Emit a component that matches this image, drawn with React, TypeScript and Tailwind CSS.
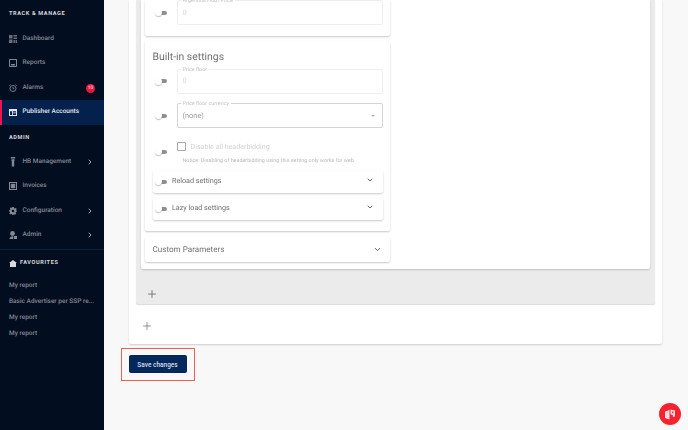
import { ChevronDown, ChevronRight, Plus } from 'lucide-react';

const icons = {
    dashboard: (
        <svg width="8" height="8" viewBox="0 0 8 8" fill="currentColor" opacity="0.8">
            <path d="M0 0h3.5v3.5H0zM4.5 0H8v1.5H4.500zM4.500 2.500H8v1.500H4.500zM0 4.500h3.500V8H0zM4.500 5H6v3H4.500zM6.600 5H8v3H6.600z" />
        </svg>
    ),
    reports: (
        <svg width="8" height="8" viewBox="0 0 8 8" fill="none" stroke="currentColor">
            <path d="M.5.5h7v7h-7z" />
            <path d="M2 5h4v1.500H2z" fill="currentColor" stroke="none" />
        </svg>
    ),
    alarm: (
        <svg width="8" height="8" viewBox="0 0 8 8" fill="none" stroke="currentColor" strokeWidth="0.9">
            <circle cx="4" cy="4.500" r="3" />
            <path d="M4 3v1.600h1.200M.4 1.600 1.600.6M7.600 1.600 6.400.6" />
        </svg>
    ),
    publisher: (
        <svg width="8" height="7" viewBox="0 0 8 7" fill="currentColor">
            <path fillRule="evenodd" d="M0 0h8v7H0zM1 2.200v3.800h2V2.200zM3.800 2.200V3.400H7V2.200zM3.800 4.200V6H7V4.200z" />
        </svg>
    ),
    hb: (
        <svg width="8" height="10" viewBox="0 0 8 10" fill="currentColor">
            <path d="M1.800 0h4.400v1.600H1.800zM2.400 2.200h3.200v1.400l-.4.700v5.200H2.800V4.300l-.4-.7z" />
        </svg>
    ),
    invoices: (
        <svg width="8" height="8" viewBox="0 0 8 8" fill="currentColor">
            <path fillRule="evenodd" d="M0 0h8v8H0zM1 1v6h6V1z" />
            <path d="M1.800 1.800h4.400v4.400H1.800z" />
        </svg>
    ),
    config: (
        <svg width="8" height="8" viewBox="0 0 8 8" fill="currentColor">
            <path fillRule="evenodd" d="M3.200 0h1.600l.2 1.100.8.4 1-.6 1 1.200-.7.9.2.8L8 3.400v1.200l-1.100.3-.4.8.6 1L6 7.900l-.9-.7-.4.1-.2.7H3.300l-.2-.7-.8-.4-1 .6-1-1.200.7-.9-.2-.8L0 4.400V3.200l1-.2.400-.8-.6-1L2 .3l.9.7.2-.1zM4 2.700a1.300 1.300 0 1 0 0 2.600 1.300 1.300 0 0 0 0-2.600z" />
        </svg>
    ),
    admin: (
        <svg width="8" height="8" viewBox="0 0 8 8" fill="currentColor">
            <path d="M3.500 0a2.400 2.400 0 0 1 2.400 2.400c0 1.300-1 2.400-2.400 2.400S1.100 3.700 1.100 2.400A2.400 2.400 0 0 1 3.500 0zM.5 8c0-1.700 1.300-2.800 3-2.800l.8.1V8z" />
            <path d="M5 5h3v3H5z" />
        </svg>
    ),
};

function NavItem({ icon, label, arrow, badge, active }: { icon: React.ReactNode; label: string; arrow?: boolean; badge?: string; active?: boolean }) {
    return (
        <div className={`flex h-[24.5px] items-center pr-[10px] ${active ? 'border-l-2 border-[#f0134d] bg-[#03214c] pl-[7px] text-[#e4e8ee]' : 'pl-[9px] text-[#828995]'}`}>
            <span className="flex w-[13.5px] shrink-0 items-center">{icon}</span>
            <span className="flex-1 text-[6.5px] font-medium whitespace-nowrap">{label}</span>
            {arrow && <ChevronRight size={8} strokeWidth={3} className="text-[#a3a8b0]" />}
            {badge && (
                <span className="-mr-[1px] mt-[1px] flex h-[9px] w-[9px] items-center justify-center rounded-full bg-[#f0143c] text-[5px] font-medium text-[#f5d5da]">{badge}</span>
            )}
        </div>
    );
}

function Toggle() {
    return (
        <span className="relative -mt-[1px] block h-[6px] w-[13px] shrink-0">
            <span className="absolute top-[1.5px] left-[3px] h-[4px] w-[9px] rounded-full bg-[#8f8f8f]" />
            <span className="absolute top-0 left-0 h-[7px] w-[7px] rounded-full bg-white shadow-[0_1px_1px_rgba(0,0,0,0.25)]" />
        </span>
    );
}

function Field({ label, value, select }: { label: string; value: string; select?: boolean }) {
    return (
        <div className="flex items-center">
            <span className="ml-[10px] w-[21.5px] shrink-0"><Toggle /></span>
            <div className={`relative flex h-[25px] flex-1 items-center rounded-[2px] border px-[5px] text-[7.4px] ${select ? 'border-[#d4d4d4] text-[#9b9b9b]' : 'border-[#eeeeee] text-[#d6d6d6]'}`}>
                <span className="absolute -top-[3px] left-[3px] bg-white px-[2px] text-[5.4px] leading-[6px] text-[#c4c4c4]">{label}</span>
                <span className="flex-1">{value}</span>
                {select && <span className="mr-[2px] h-0 w-0 border-x-[2px] border-t-[2px] border-x-transparent border-t-[#b5b5b5]" />}
            </div>
        </div>
    );
}

function SubPanel({ title, className }: { title: string; className: string }) {
    return (
        <div className={`flex h-[22px] items-center rounded-[2px] bg-white pr-[9px] shadow-[0_1px_2px_rgba(0,0,0,0.22)] ${className}`}>
            <span className="ml-[2.5px] w-[17px]"><Toggle /></span>
            <span className="flex-1 text-[7.2px] text-[#6f6f6f]">{title}</span>
            <ChevronDown size={8} strokeWidth={2.5} className="-mt-[3px] text-[#444444]" />
        </div>
    );
}

export default function App() {
    return (
        <div className="flex h-[430px] w-[688px] overflow-hidden bg-[#f8f8f8] font-['Roboto',sans-serif] [text-rendering:geometricPrecision]">
            <aside className="flex w-[104px] shrink-0 flex-col bg-[#020d20] [will-change:opacity]">
                <div className="pt-[10.5px] pb-[9px] pl-[9px] text-[5.6px] leading-[7px] font-bold tracking-[0.6px] text-[#d5d8dd]">TRACK &amp; MANAGE</div>
                <NavItem icon={icons.dashboard} label="Dashboard" />
                <NavItem icon={icons.reports} label="Reports" />
                <NavItem icon={icons.alarm} label="Alarms" badge="10" />
                <NavItem icon={icons.publisher} label="Publisher Accounts" active />
                <div className="pt-[10px] pb-[8px] pl-[9px] text-[5.6px] leading-[7px] font-bold tracking-[0.6px] text-[#d5d8dd]">ADMIN</div>
                <NavItem icon={icons.hb} label="HB Management" arrow />
                <NavItem icon={icons.invoices} label="Invoices" />
                <NavItem icon={icons.config} label="Configuration" arrow />
                <NavItem icon={icons.admin} label="Admin" arrow />
                <div className="mt-[1px] border-t border-[#0a2342] pt-[10px] pb-[8px]">
                    <div className="flex h-[7px] items-center pl-[9px] text-[5.6px] font-bold tracking-[0.6px] text-[#d5d8dd]">
                        <svg width="8" height="7" viewBox="0 0 8 7" fill="currentColor" className="mr-[3px]">
                            <path d="M4 0 8 3H7v4H1V3H0z" />
                        </svg>
                        FAVOURITES
                    </div>
                </div>
                <div className="flex flex-col pt-[2px] pl-[9px] text-[6.5px] leading-[16.2px] font-medium text-[#828995]">
                    <span>My report</span>
                    <span className="whitespace-nowrap">Basic Advertiser per SSP re...</span>
                    <span>My report</span>
                    <span>My report</span>
                </div>
            </aside>

            <main className="relative flex-1 pl-[25px] [will-change:opacity]">
                <div className="w-[533px] rounded-b-[2px] bg-white px-[7px] shadow-[0_1px_2px_rgba(0,0,0,0.18)]">
                    <div className="rounded-b-[2px] bg-[#ebebeb] px-[5px] shadow-[0_1px_1px_rgba(0,0,0,0.15)]">
                        <div className="rounded-b-[2px] bg-white pr-[260px] pb-[7px] pl-[4px] shadow-[0_1px_2px_rgba(0,0,0,0.18)]">
                            <div className="h-[36px] rounded-b-[2px] bg-white pr-[7px] shadow-[0_1px_2px_rgba(0,0,0,0.22)]">
                                <Field label="Argentina Floor Price" value="0" />
                            </div>
                            <div className="mt-[5px] h-[190px] rounded-[2px] bg-white pt-[10px] pr-[7px] shadow-[0_1px_2px_rgba(0,0,0,0.22)]">
                                <div className="pl-[7.5px] text-[10.4px] leading-[12px] text-[#707070]">Built-in settings</div>
                                <div className="mt-[5.5px] flex flex-col gap-[9.5px]">
                                    <Field label="Price floor" value="0" />
                                    <Field label="Price floor currency" value="(none)" select />
                                </div>
                                <div className="mt-[14px] flex">
                                    <span className="ml-[10px] w-[21.5px] shrink-0 pt-[7px]"><Toggle /></span>
                                    <div>
                                        <div className="flex items-center">
                                            <span className="h-[9px] w-[9px] rounded-[1px] border border-[#a8a8a8]" />
                                            <span className="ml-[5px] text-[7.1px] leading-[9px] text-[#d2d2d2]">Disable all headerbidding</span>
                                        </div>
                                        <div className="mt-[7px] pl-[6px] text-[5.4px] leading-[7px] whitespace-nowrap text-[#b8b8b8]">Notice: Disabling of headerbidding using this setting only works for web</div>
                                    </div>
                                </div>
                                <SubPanel title="Reload settings" className="mt-[5.5px] ml-[7.5px]" />
                                <SubPanel title="Lazy load settings" className="mt-[5px] ml-[7.5px]" />
                            </div>
                            <div className="mt-[6px] flex h-[25px] items-center justify-between rounded-[2px] bg-white pr-[8px] pl-[7.5px] shadow-[0_1px_2px_rgba(0,0,0,0.22)]">
                                <span className="-mt-[1px] text-[8.1px] text-[#707070]">Custom Parameters</span>
                                <ChevronDown size={9} strokeWidth={2.5} className="text-[#555555]" />
                            </div>
                        </div>
                        <div className="h-[35px] pt-[18.5px] pl-[4.5px]">
                            <Plus size={12} strokeWidth={1.6} className="text-[#666666]" />
                        </div>
                    </div>
                    <div className="h-[40px] pt-[15.5px] pl-[5px]">
                        <Plus size={12} strokeWidth={1.6} className="text-[#777777]" />
                    </div>
                </div>

                <div className="mt-[3.5px] -ml-[8.5px] flex w-fit border-[1.5px] border-[#ee5f50] px-[7px] py-[6.5px]">
                    <button className="flex h-[18px] w-[58px] items-center justify-center rounded-[2px] bg-[#03295c] pt-[1px] text-[6.5px] leading-[8px] font-medium text-[#d8dde5]">Save changes</button>
                </div>

                <div className="absolute right-[7.5px] bottom-[5px] flex h-[22px] w-[22px] items-center justify-center rounded-full bg-[#f5222f]">
                    <svg width="10" height="11" viewBox="0 0 10 11" fill="none">
                        <path d="M0 2.500 4.500 1v9.500L0 9z" fill="#ffd9dc" />
                        <path d="M5.500.5 10 1.500v6l-2.200.6V6L5.500 5.500z" fill="#ffd9dc" />
                        <path d="M7 2.500h1.400v1.800H7z" fill="#f5222f" />
                    </svg>
                </div>
            </main>
        </div>
    );
}
